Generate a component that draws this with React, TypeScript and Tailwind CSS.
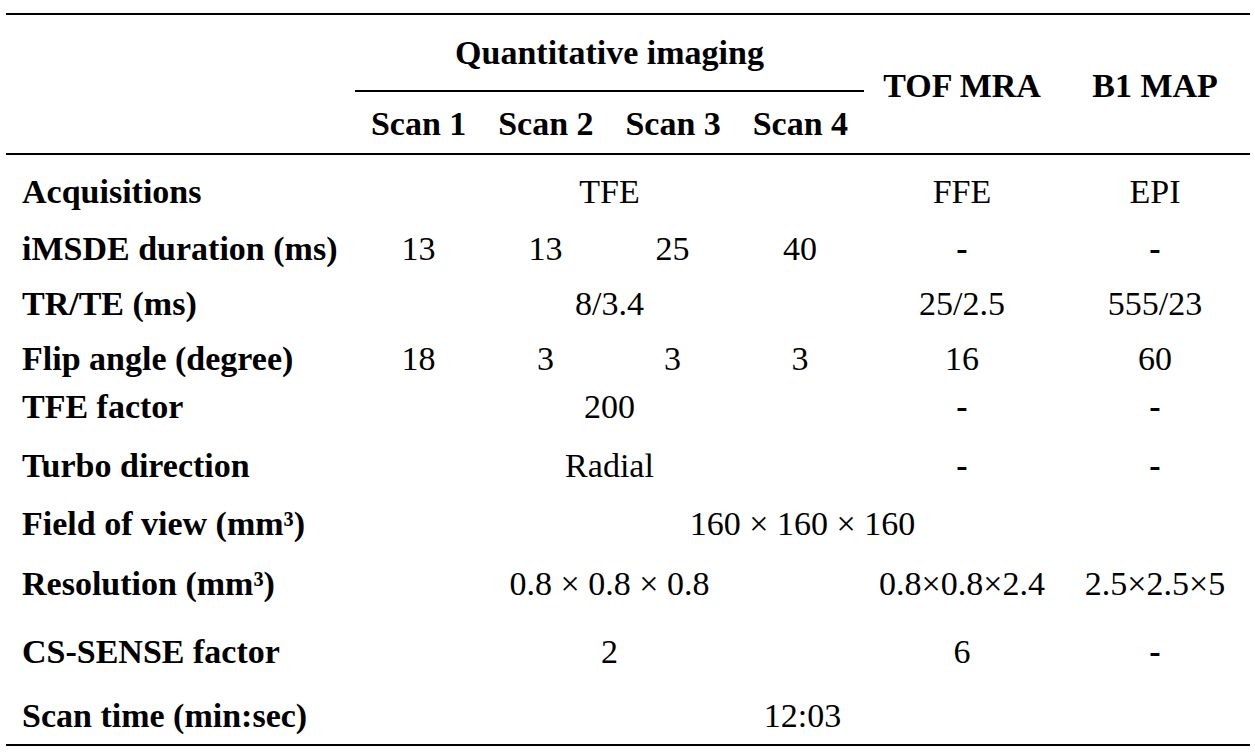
type Cell = { text: string; span?: number; bold?: boolean };
type Row = { label: string; height: string; cells: Cell[] };

const cols = "grid grid-cols-[349px_127px_127px_127px_128px_196px_190px]";

const rows: Row[] = [
  {
    label: "Acquisitions",
    height: "h-[57px]",
    cells: [{ text: "TFE", span: 4 }, { text: "FFE" }, { text: "EPI" }],
  },
  {
    label: "iMSDE duration (ms)",
    height: "h-[55px]",
    cells: [
      { text: "13" },
      { text: "13" },
      { text: "25" },
      { text: "40" },
      { text: "-", bold: true },
      { text: "-", bold: true },
    ],
  },
  {
    label: "TR/TE (ms)",
    height: "h-[55px]",
    cells: [{ text: "8/3.4", span: 4 }, { text: "25/2.5" }, { text: "555/23" }],
  },
  {
    label: "Flip angle (degree)",
    height: "h-[48px]",
    cells: [
      { text: "18" },
      { text: "3" },
      { text: "3" },
      { text: "3" },
      { text: "16" },
      { text: "60" },
    ],
  },
  {
    label: "TFE factor",
    height: "h-[59px]",
    cells: [{ text: "200", span: 4 }, { text: "-", bold: true }, { text: "-", bold: true }],
  },
  {
    label: "Turbo direction",
    height: "h-[58px]",
    cells: [{ text: "Radial", span: 4 }, { text: "-", bold: true }, { text: "-", bold: true }],
  },
  {
    label: "Field of view (mm³)",
    height: "h-[60px]",
    cells: [{ text: "160 × 160 × 160", span: 6 }],
  },
  {
    label: "Resolution (mm³)",
    height: "h-[68px]",
    cells: [
      { text: "0.8 × 0.8 × 0.8", span: 4 },
      { text: "0.8×0.8×2.4" },
      { text: "2.5×2.5×5" },
    ],
  },
  {
    label: "CS-SENSE factor",
    height: "h-[64px]",
    cells: [{ text: "2", span: 4 }, { text: "6" }, { text: "-", bold: true }],
  },
  {
    label: "Scan time (min:sec)",
    height: "h-[45px]",
    cells: [{ text: "12:03", span: 6 }],
  },
];

const spanClass: Record<number, string> = {
  1: "col-span-1",
  4: "col-span-4",
  6: "col-span-6",
};

export default function App() {
  return (
    <div className="min-h-screen bg-white pl-[6px] pt-[13px] font-['Liberation_Serif','Times_New_Roman',serif] text-[34px] leading-[34px] text-black">
      <div className="w-[1244px] border-y-2 border-black">
        {/* Header */}
        <div className="flex h-[140px] border-b-2 border-black">
          <div className="w-[349px]" />
          <div className="w-[509px] font-bold">
            <div className="h-[75px] pt-[21px] text-center">Quantitative imaging</div>
            <div className="border-t-2 border-black pt-[15px]">
              <div className="grid grid-cols-4 text-center">
                <div>Scan 1</div>
                <div>Scan 2</div>
                <div>Scan 3</div>
                <div>Scan 4</div>
              </div>
            </div>
          </div>
          <div className="w-[196px] pt-[54px] text-center font-bold">TOF MRA</div>
          <div className="w-[190px] pt-[54px] text-center font-bold">B1 MAP</div>
        </div>

        {/* Body */}
        <div className="pt-[20px]">
          {rows.map((r) => (
            <div key={r.label} className={`${cols} ${r.height}`}>
              <div className="pl-4 font-bold whitespace-nowrap">{r.label}</div>
              {r.cells.map((c, i) => (
                <div
                  key={i}
                  className={`${spanClass[c.span ?? 1]} text-center whitespace-nowrap ${c.bold ? "font-bold" : ""}`}
                >
                  {c.text}
                </div>
              ))}
            </div>
          ))}
        </div>
      </div>
    </div>
  );
}
